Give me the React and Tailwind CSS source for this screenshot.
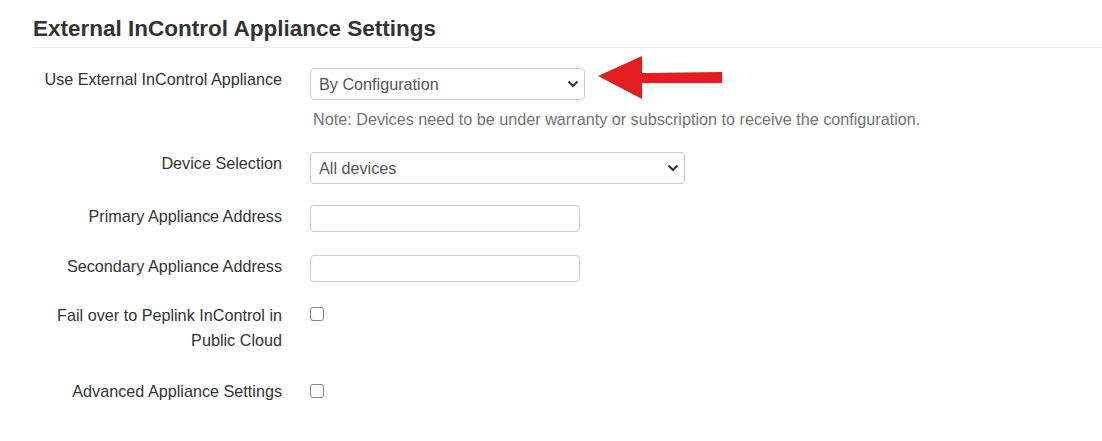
import React from 'react';

const font = { fontFamily: '"Liberation Sans", Arial, sans-serif' };

function Chevron() {
  return (
    <svg className="pointer-events-none absolute right-[6px] top-1/2 -translate-y-1/2" width="12" height="8" viewBox="0 0 12 8">
      <path d="M1.5 1.5 L6 6 L10.5 1.5" fill="none" stroke="#333" strokeWidth="2" />
    </svg>
  );
}

function Select({ value, width }) {
  return (
    <div className={`relative h-[32px] ${width}`}>
      <select
        defaultValue={value}
        className="h-full w-full appearance-none rounded-[4px] border border-[#ccc] bg-white pl-[8px] text-[16.2px] text-[#555] outline-none"
        style={font}
      >
        <option>{value}</option>
      </select>
      <Chevron />
    </div>
  );
}

function TextInput() {
  return <input type="text" className="block h-[27px] w-[270px] rounded-[4px] border border-[#ccc] bg-white outline-none" />;
}

function Check() {
  return <span className="mt-[4px] block h-[14px] w-[14px] rounded-[3px] border border-[#858585] bg-white" />;
}

function Row({ label, className = '', labelClass = 'leading-[22px]', children }) {
  return (
    <div className={`flex items-start ${className}`}>
      <div className={`w-[249px] shrink-0 text-right text-[16.2px] text-[#333] ${labelClass}`}>{label}</div>
      <div className="ml-[28px] flex flex-col items-start">{children}</div>
    </div>
  );
}

function Arrow() {
  return (
    <svg className="absolute left-[596px] top-[54px]" width="130" height="48" viewBox="0 0 130 48">
      <polygon points="2,22 46,2 46,19 126,18 126,29 46,29 46,45" fill="#e41e20" />
    </svg>
  );
}

export default function App() {
  return (
    <div className="relative h-[441px] w-[1102px] overflow-hidden bg-white" style={font}>
      <div className="ml-[33px] border-b border-[#eee] pb-[6px] pt-[17px]">
        <h2 className="text-[22.5px] font-bold leading-[24px] text-[#333]">External InControl Appliance Settings</h2>
      </div>

      <div className="pl-[33px]">
        <Row label="Use External InControl Appliance" className="mt-[20px]">
          <Select value="By Configuration" width="w-[275px]" />
          <p className="mt-[9px] ml-[3px] text-[16.2px] leading-[20px] text-[#737373]">
            Note: Devices need to be under warranty or subscription to receive the configuration.
          </p>
        </Row>

        <Row label="Device Selection" className="mt-[23px]">
          <Select value="All devices" width="w-[375px]" />
        </Row>

        <Row label="Primary Appliance Address" className="mt-[21px]">
          <TextInput />
        </Row>

        <Row label="Secondary Appliance Address" className="mt-[23px]">
          <TextInput />
        </Row>

        <Row label="Fail over to Peplink InControl in Public Cloud" className="mt-[21px]" labelClass="leading-[25px] pl-[20px]">
          <Check />
        </Row>

        <Row label="Advanced Appliance Settings" className="mt-[27px]">
          <Check />
        </Row>
      </div>

      <Arrow />
    </div>
  );
}
